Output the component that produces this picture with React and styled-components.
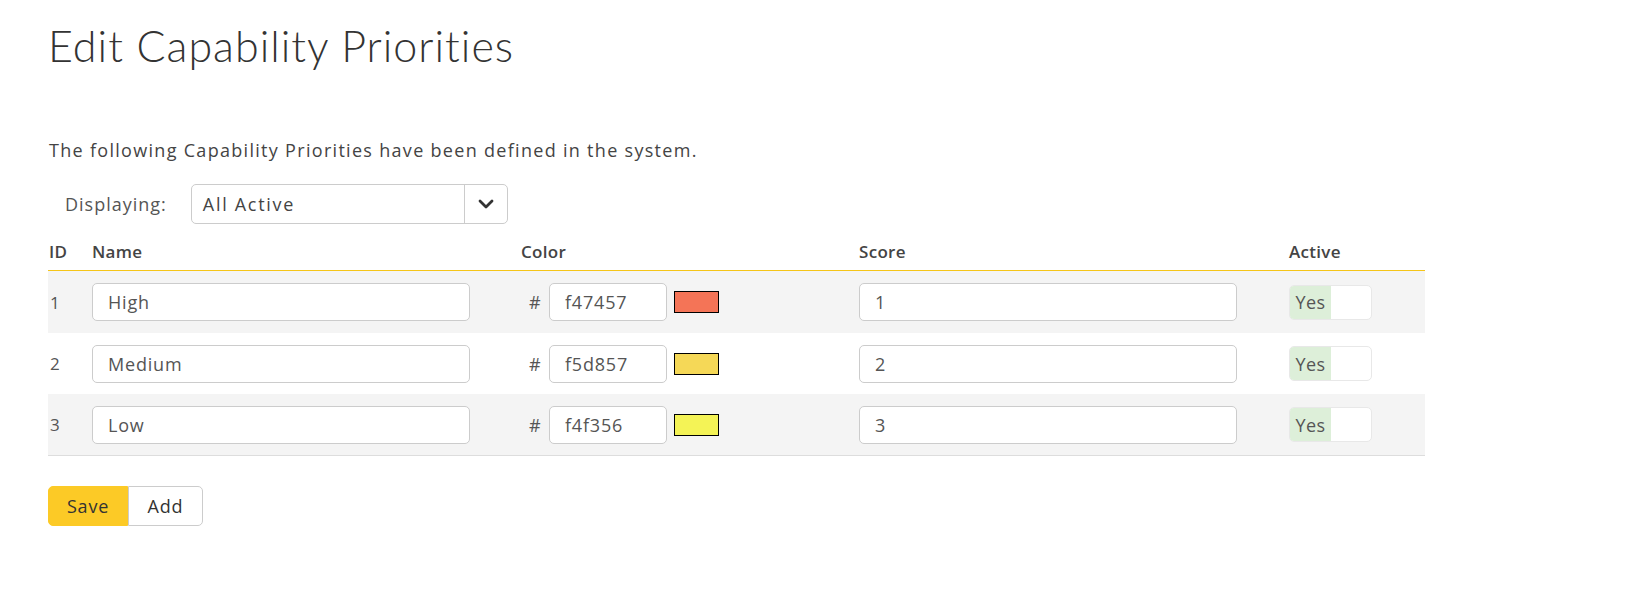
import React from 'react';
import styled, { createGlobalStyle } from 'styled-components';

const GlobalStyle = createGlobalStyle`
  body {
    margin: 0;
    background: #fff;
    font-family: "Open Sans", "Noto Sans", sans-serif;
    color: #444;
  }
`;

const Page = styled.div`
  padding: 0 0 0 48px;
  width: 1377px;
`;

const Title = styled.h1`
  margin: 0;
  padding-top: 20px;
  font-family: "Lato", "Open Sans", sans-serif;
  font-weight: 300;
  font-size: 43px;
  line-height: 52px;
  color: #333;
  letter-spacing: 1px;
`;

const Intro = styled.p`
  margin: 66px 0 0 1px;
  font-size: 18px;
  line-height: 24px;
  letter-spacing: 1.3px;
  color: #444;
`;

const FilterRow = styled.div`
  display: flex;
  align-items: center;
  gap: 24px;
  margin-top: 22px;
  padding-left: 17px;
`;

const FilterLabel = styled.label`
  font-size: 18px;
  font-weight: 500;
  letter-spacing: 1px;
  color: #555;
`;

const Select = styled.div`
  display: flex;
  width: 317px;
  height: 40px;
  box-sizing: border-box;
  border: 1px solid #ccc;
  border-radius: 5px;
  background: #fff;
`;

const SelectValue = styled.div`
  flex: 1;
  display: flex;
  align-items: center;
  padding-left: 11px;
  font-size: 18px;
  letter-spacing: 1.7px;
  color: #444;
`;

const SelectButton = styled.div`
  width: 42px;
  display: flex;
  align-items: center;
  justify-content: center;
  border-left: 1px solid #ccc;
`;

const Table = styled.div`
  display: flex;
  flex-direction: column;
`;

const Row = styled.div`
  display: grid;
  grid-template-columns: 44px 429px 338px 430px 136px;
  align-items: center;
  background: ${p => (p.$shaded ? '#f4f4f4' : '#fff')};
  height: ${p => p.$h}px;
  border-bottom: ${p => p.$border || 'none'};
`;

const Head = styled.div`
  font-size: 17px;
  font-weight: 600;
  letter-spacing: 0.3px;
  color: #444;
  padding-left: ${p => p.$pl || 0}px;
  padding-top: 8px;
`;

const IdCell = styled.div`
  font-size: 17px;
  color: #555;
  padding-left: 2px;
`;

const TextInput = styled.input`
  box-sizing: border-box;
  width: ${p => p.$w}px;
  height: 38px;
  border: 1px solid #ccc;
  border-radius: 5px;
  background: #fff;
  padding: 0 0 0 15px;
  font-family: "Open Sans", "Noto Sans", sans-serif;
  font-size: 18px;
  letter-spacing: 0.8px;
  color: #555;
  outline: none;
`;

const ColorCell = styled.div`
  display: flex;
  align-items: center;
  padding-left: 8px;
`;

const Hash = styled.span`
  font-size: 18px;
  color: #555;
  width: 20px;
`;

const Swatch = styled.span`
  width: 45px;
  height: 22px;
  box-sizing: border-box;
  border: 1px solid #000;
  background: ${p => p.$color};
  margin-left: 7px;
`;

const Toggle = styled.div`
  display: flex;
  width: 83px;
  height: 35px;
  box-sizing: border-box;
  border: 1px solid #e8e8e8;
  border-radius: 5px;
  overflow: hidden;
  background: #fff;
`;

const ToggleOn = styled.div`
  width: 41px;
  background: #ddefd9;
  display: flex;
  align-items: center;
  justify-content: center;
  font-size: 18px;
  letter-spacing: 0.5px;
  color: #555;
`;

const ButtonGroup = styled.div`
  display: flex;
  margin-top: 30px;
`;

const Button = styled.button`
  height: 40px;
  box-sizing: border-box;
  font-family: "Open Sans", "Noto Sans", sans-serif;
  font-size: 18px;
  letter-spacing: 0.8px;
  color: #333;
  cursor: pointer;
  padding: 0;
  width: ${p => p.$w}px;
  background: ${p => (p.$primary ? '#fcca26' : '#fff')};
  border: 1px solid ${p => (p.$primary ? '#fcca26' : '#ccc')};
  border-radius: ${p => (p.$primary ? '5px 0 0 5px' : '0 5px 5px 0')};
`;

const priorities = [
  { id: 1, name: 'High', color: 'f47457', score: '1' },
  { id: 2, name: 'Medium', color: 'f5d857', score: '2' },
  { id: 3, name: 'Low', color: 'f4f356', score: '3' },
];

export default function App() {
  return (
    <Page>
      <GlobalStyle />
      <Title>Edit Capability Priorities</Title>
      <Intro>The following Capability Priorities have been defined in the system.</Intro>
      <FilterRow>
        <FilterLabel>Displaying:</FilterLabel>
        <Select>
          <SelectValue>All Active</SelectValue>
          <SelectButton>
            <svg width="16" height="10" viewBox="0 0 16 10">
              <path d="M2 2l6 6 6-6" fill="none" stroke="#333" strokeWidth="2.8" strokeLinecap="round" strokeLinejoin="round" />
            </svg>
          </SelectButton>
        </Select>
      </FilterRow>
      <Table>
        <Row $h={46} $border="1px solid #f5c518">
          <Head $pl={1}>ID</Head>
          <Head>Name</Head>
          <Head>Color</Head>
          <Head>Score</Head>
          <Head>Active</Head>
        </Row>
        {priorities.map((p, i) => (
          <Row key={p.id} $shaded={i % 2 === 0} $h={i === 0 ? 62 : 61} $border={i === priorities.length - 1 ? '1px solid #ddd' : 'none'}>
            <IdCell>{p.id}</IdCell>
            <div><TextInput $w={378} defaultValue={p.name} /></div>
            <ColorCell>
              <Hash>#</Hash>
              <TextInput $w={118} defaultValue={p.color} />
              <Swatch $color={'#' + p.color} />
            </ColorCell>
            <div><TextInput $w={378} defaultValue={p.score} /></div>
            <div>
              <Toggle><ToggleOn>Yes</ToggleOn></Toggle>
            </div>
          </Row>
        ))}
      </Table>
      <ButtonGroup>
        <Button $primary $w={80}>Save</Button>
        <Button $w={75}>Add</Button>
      </ButtonGroup>
    </Page>
  );
}
